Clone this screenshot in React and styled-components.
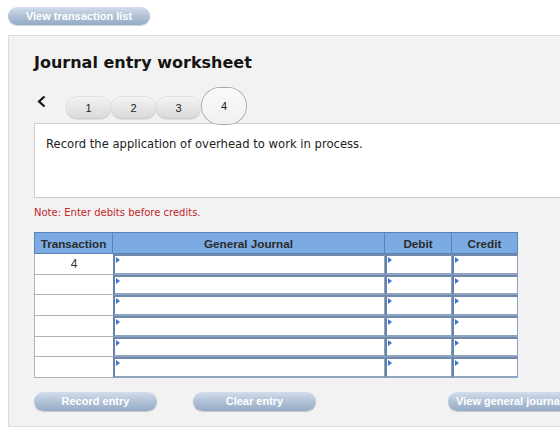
import React from 'react'
import styled, { createGlobalStyle } from 'styled-components'

const GlobalStyle = createGlobalStyle`
  html, body {
    margin: 0;
    padding: 0;
    background: #fff;
    overflow: hidden;
  }
  body {
    font-family: "DejaVu Sans", Verdana, sans-serif;
  }
`

const Page = styled.div`
  width: 560px;
  height: 429px;
  padding: 7px 0 0 8px;
  box-sizing: border-box;
  overflow: hidden;
`

const PillButton = styled.button`
  display: flex;
  align-items: center;
  justify-content: center;
  width: ${p => p.$width || 123}px;
  height: ${p => p.$height || 19}px;
  flex-shrink: 0;
  padding: 0;
  border: none;
  border-radius: 10px;
  background: linear-gradient(#d3dded 0%, #b4c4d8 45%, #94aac5 100%);
  box-shadow: 0 1px 1px rgba(0, 0, 0, 0.18);
  color: #fff;
  font-family: "Liberation Sans", Arial, sans-serif;
  font-weight: 700;
  font-size: 11px;
  white-space: nowrap;
  overflow: hidden;
`

const Panel = styled.div`
  margin-top: 10px;
  width: 620px;
  height: 392px;
  box-sizing: border-box;
  background: #f2f2f2;
  border: 1px solid #dcdcdc;
  padding-left: 25px;
`

const Title = styled.h1`
  margin: 17px 0 0;
  font-size: 16px;
  line-height: 20px;
  font-weight: 700;
  color: #141414;
`

const TabsRow = styled.div`
  display: flex;
  align-items: center;
  height: 37px;
  margin-top: 13px;
`

const Back = styled.div`
  display: flex;
  width: 9px;
  margin: 0 20px 7px 3px;
`

const Tab = styled.div`
  display: flex;
  align-items: center;
  justify-content: center;
  width: 45px;
  height: 22px;
  margin-top: 6px;
  border-radius: 11px;
  background: linear-gradient(#f3f3f3, #d9d9d9);
  box-shadow: inset 0 -1px 0 rgba(0, 0, 0, 0.06), 0 0 0 0.5px #d0d0d0;
  font-family: "Liberation Sans", Arial, sans-serif;
  font-size: 11px;
  color: #222;
`

const ActiveTab = styled(Tab)`
  width: 44px;
  height: 36px;
  margin: 0 0 -2px 1px;
  border-radius: 18px;
  background: linear-gradient(#fafafa, #f0f0f0);
  box-shadow: 0 0 0 1px #a9a9a9;
  position: relative;
  z-index: 1;
`

const QuestionBox = styled.div`
  height: 75px;
  margin-right: 25px;
  box-sizing: border-box;
  background: #fff;
  border: 1px solid #cfcfcf;
  padding: 13px 11px;
  font-size: 11.6px;
  line-height: 14px;
  color: #222;
`

const Note = styled.div`
  margin-top: 8px;
  font-size: 10px;
  line-height: 14px;
  color: #c2262a;
`

const Grid = styled.div`
  display: grid;
  grid-template-columns: 79px 272px 67px 66px;
  grid-template-rows: 22px repeat(6, 20.67px);
  width: 484px;
  margin-top: 12px;
  font-family: "Liberation Sans", Arial, sans-serif;
  font-size: 11px;
`

const HeadCell = styled.div`
  display: flex;
  align-items: center;
  justify-content: center;
  background: #7babe2;
  border: 1px solid #5a83b6;
  border-left-width: ${p => (p.$first ? 1 : 0)}px;
  font-size: 11.7px;
  font-weight: 700;
  color: #2b2b2b;
`

const TxCell = styled.div`
  display: flex;
  align-items: center;
  justify-content: center;
  background: #fff;
  border-left: 1px solid #b3b3b3;
  border-bottom: 1px solid #b3b3b3;
  font-size: 12px;
  color: #333;
`

const InputCell = styled.div`
  position: relative;
  box-sizing: border-box;
  background: #fff;
  border: 2px solid #8fa4c0;
  border-top-color: #7089ad;
  border-left-color: #6682ab;
  border-right-width: 1px;

  &::before {
    content: '';
    position: absolute;
    top: 1px;
    left: 1px;
    border-left: 4px solid #3c78c8;
    border-top: 3px solid transparent;
    border-bottom: 3px solid transparent;
  }
`

const ButtonRow = styled.div`
  display: flex;
  margin-top: 14px;
`

const Gap = styled.div`
  width: ${p => p.$w}px;
  flex-shrink: 0;
`

const rows = ['4', '', '', '', '', '']

export default function App() {
  return (
    <Page>
      <GlobalStyle />
      <PillButton $width={142} $height={18}>View transaction list</PillButton>
      <Panel>
        <Title>Journal entry worksheet</Title>
        <TabsRow>
          <Back>
            <svg width="9" height="13" viewBox="0 0 9 13">
              <polyline points="7.5,1.5 2,6.5 7.5,11.5" fill="none" stroke="#111" strokeWidth="2.2" />
            </svg>
          </Back>
          <Tab>1</Tab>
          <Tab>2</Tab>
          <Tab>3</Tab>
          <ActiveTab>4</ActiveTab>
        </TabsRow>
        <QuestionBox>Record the application of overhead to work in process.</QuestionBox>
        <Note>Note: Enter debits before credits.</Note>
        <Grid>
          <HeadCell $first>Transaction</HeadCell>
          <HeadCell>General Journal</HeadCell>
          <HeadCell>Debit</HeadCell>
          <HeadCell>Credit</HeadCell>
          {rows.map((t, i) => (
            <React.Fragment key={i}>
              <TxCell>{t}</TxCell>
              <InputCell />
              <InputCell />
              <InputCell />
            </React.Fragment>
          ))}
        </Grid>
        <ButtonRow>
          <PillButton>Record entry</PillButton>
          <Gap $w={36} />
          <PillButton>Clear entry</PillButton>
          <Gap $w={132} />
          <PillButton>View general journal</PillButton>
        </ButtonRow>
      </Panel>
    </Page>
  )
}
